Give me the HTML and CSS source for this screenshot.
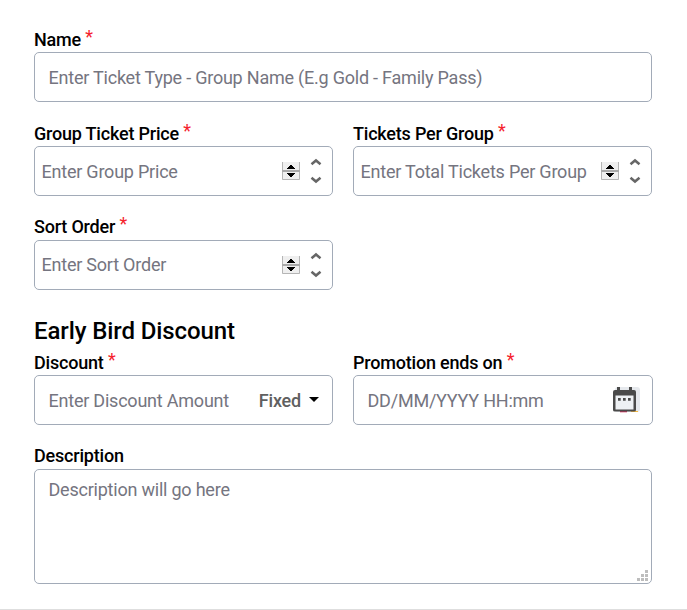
FILE: index.html
```html
<!DOCTYPE html>
<html lang="en">
<head>
<meta charset="utf-8">
<title>Group Ticket</title>
<link rel="stylesheet" href="styles.css">
</head>
<body>
<svg class="defs" aria-hidden="true">
  <symbol id="spin" viewBox="0 0 18 18">
    <path fill="#efefef" d="M0 0h18v18H0z"/>
    <path fill="none" stroke="#b5b5b5" d="M.5 0v17.500h17V0"/>
    <path fill="#a8a8a8" d="M0 8h18v2H0z"/>
    <path d="M8 3h2v1h1v1h1v1h1v1H5V6h1V5h1V4h1zM5 11h8v1h-1v1h-1v1h-1v1H8v-1H7v-1H6v-1H5z"/>
  </symbol>
  <symbol id="arrows" viewBox="0 0 12 26">
    <path fill="none" stroke="#666" stroke-width="2.500" d="M1.500 6.300 6 2.500l4.500 3.800M1.500 19.700 6 23.500l4.500-3.800"/>
  </symbol>
</svg>
<form class="form">
  <div class="group wide">
    <label class="label">Name <span class="req">*</span></label>
    <div class="field"><span class="hint">Enter Ticket Type - Group Name (E.g Gold - Family Pass)</span></div>
  </div>
  <div class="group">
    <label class="label">Group Ticket Price <span class="req">*</span></label>
    <div class="field number"><span class="hint">Enter Group Price</span><svg class="spin"><use href="#spin"/></svg><svg class="arrows"><use href="#arrows"/></svg></div>
  </div>
  <div class="group">
    <label class="label">Tickets Per Group <span class="req">*</span></label>
    <div class="field number"><span class="hint">Enter Total Tickets Per Group</span><svg class="spin"><use href="#spin"/></svg><svg class="arrows"><use href="#arrows"/></svg></div>
  </div>
  <div class="group">
    <label class="label raised">Sort Order <span class="req">*</span></label>
    <div class="field number sort"><span class="hint">Enter Sort Order</span><svg class="spin"><use href="#spin"/></svg><svg class="arrows"><use href="#arrows"/></svg></div>
  </div>
  <h2 class="title wide">Early Bird Discount</h2>
  <div class="group">
    <label class="label">Discount <span class="req">*</span></label>
    <div class="field select"><span class="hint">Enter Discount Amount</span><span class="unit">Fixed</span><svg class="caret" viewBox="0 0 10 5"><path d="M0 0h10L5 5z"/></svg></div>
  </div>
  <div class="group date-group">
    <label class="label">Promotion ends on <span class="req">*</span></label>
    <div class="field date"><span class="hint">DD/MM/YYYY HH:mm</span>
      <svg class="calendar" viewBox="0 0 27 26">
        <rect x="2" y="0" width="25" height="25" rx="3" fill="#e6e9ed"/>
        <path fill="#d32f5b" d="M7 24h7v1.300H7z"/><path fill="#f5b942" d="M18 24h7v1h-7z"/>
        <path fill="#4a4a4a" d="M4 0h3v3h9V0h3v3h2q2 0 2 2v18q0 1.500-2 1.500H2q-2 0-2-1.500V5q0-2 2-2h2z"/>
        <path fill="#eef1f4" d="M2.500 8.500h18v14h-18z"/>
        <path fill="#4a4a4a" d="M5 11h2.700v2.700H5zM10 11h2.700v2.700H10zM15 11h2.700v2.700H15z"/>
      </svg>
    </div>
  </div>
  <div class="group wide">
    <label class="label raised">Description</label>
    <div class="field area"><span class="hint">Description will go here</span>
      <svg class="grip" viewBox="0 0 11 11"><path fill="#bdbdbd" d="M8 0h3v3H8zM4 4h3v3H4zM8 4h3v3H8zM0 8h3v3H0zM4 8h3v3H4zM8 8h3v3H8z"/></svg>
    </div>
  </div>
</form>
</body>
</html>
```
FILE: styles.css
```css
* { box-sizing: border-box; }
body {
  margin: 0;
  height: 610px;
  background: #fff;
  color: #000;
  font: 18px/24px Roboto, sans-serif;
  letter-spacing: -0.2px;
}
.defs { position: absolute; width: 0; height: 0; }
.form {
  height: 610px;
  padding: 28px 35px 0 34px;
  display: grid;
  grid-template-columns: 299px 299px;
  column-gap: 20px;
  row-gap: 20px;
  align-content: start;
  border-bottom: 1px solid #dedede;
}
.wide { grid-column: 1 / -1; }
.label { display: block; height: 24px; font-weight: 500; white-space: nowrap; }
.raised { line-height: 22px; }
.req { color: #f5222d; font-weight: 400; position: relative; top: -3px; }
.field {
  display: flex;
  align-items: center;
  height: 50px;
  padding: 0 14px 0 13.5px;
  border: 1px solid #a2abb8;
  border-radius: 5px;
  background: #fff;
}
.hint { flex: 1; padding-top: 2px; color: #757580; letter-spacing: -0.22px; white-space: nowrap; }
.number { padding: 0 10px 0 6.5px; }
.sort .hint { padding-top: 0; }
.spin { width: 18px; height: 18px; }
.arrows { width: 12px; height: 26px; margin-left: 10px; }
.title { margin: 1px 0 -20px; height: 40px; font-size: 24px; line-height: 40px; font-weight: 500; letter-spacing: -0.1px; }
.select { padding-right: 13px; }
.unit { padding-top: 2px; color: #606060; font-weight: 500; }
.caret { width: 10px; height: 5px; margin-left: 8px; margin-top: -2px; }
.date-group { width: 300px; }
.date { padding-right: 12px; }
.calendar { width: 27px; height: 26px; }
.area { position: relative; height: 115px; align-items: flex-start; padding-top: 8px; }
.area .hint { padding-top: 0; }
.grip { position: absolute; right: 3px; bottom: 2px; width: 11px; height: 11px; }
```
